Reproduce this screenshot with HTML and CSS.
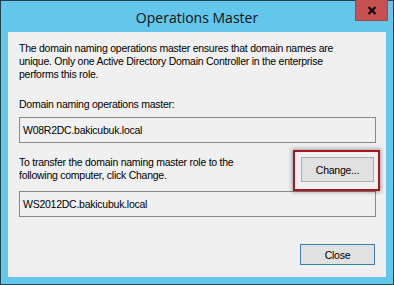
FILE: index.html
```html
<!DOCTYPE html>
<html lang="en">

<head>
    <meta charset="UTF-8">
    <meta name="viewport" content="width=device-width, initial-scale=1.0">
    <title>Operations Master</title>
    <link rel="stylesheet" href="styles.css">
</head>

<body>
    <div class="window">
        <div class="titlebar">
            <span class="title">Operations Master</span>
            <button class="close-x" aria-label="Close">
                <svg width="10" height="9" viewBox="0 0 10 9">
                    <path d="M1.5 1 L8.5 8 M8.5 1 L1.5 8" stroke="#111" stroke-width="2.4" fill="none" />
                </svg>
            </button>
        </div>

        <div class="client">
            <p class="intro">The domain naming operations master ensures that domain names are unique. Only one Active Directory Domain Controller in the enterprise performs this role.</p>

            <label class="field-label">Domain naming operations master:</label>
            <div class="textbox">W08R2DC.bakicubuk.local</div>

            <div class="transfer-row">
                <p class="transfer-text">To transfer the domain naming master role to the following computer, click Change.</p>
                <div class="highlight-wrap">
                    <button class="btn">Change...</button>
                    <span class="highlight"></span>
                </div>
            </div>
            <div class="textbox second">WS2012DC.bakicubuk.local</div>

            <div class="footer">
                <button class="btn default">Close</button>
            </div>
        </div>
    </div>
</body>

</html>
```

FILE: styles.css
```css
body {
    margin: 0;
    padding: 0;
    font-family: "Liberation Sans", Arial, sans-serif;
    font-size: 10.5px;
    letter-spacing: -0.25px;
    color: #000000;
    background: #ffffff;
}

.window {
    width: 394px;
    height: 285px;
    box-sizing: border-box;
    border: 1px solid #23404f;
    background-color: #62c7ea;
    display: flex;
    flex-direction: column;
    padding: 0 7px 7px 7px;
}

.titlebar {
    height: 31px;
    position: relative;
    display: flex;
    align-items: center;
    justify-content: center;
}

.title {
    font-family: "Open Sans", "Noto Sans", sans-serif;
    font-size: 14px;
    letter-spacing: 0;
    color: #111111;
    margin-top: 1px;
}

.close-x {
    position: absolute;
    top: -1px;
    right: -2px;
    width: 33px;
    height: 21px;
    padding: 0;
    border: 1px solid #9e4a46;
    border-top: none;
    background-color: #c75050;
    display: flex;
    align-items: center;
    justify-content: center;
}

.client {
    flex: 1;
    background-color: #f0f0f0;
    display: flex;
    flex-direction: column;
    padding: 10px 10px 0 11px;
}

.intro {
    margin: 0;
    line-height: 13px;
    max-width: 332px;
}

.field-label {
    display: block;
    margin-top: 17px;
    line-height: 13px;
}

.textbox {
    margin-top: 6px;
    height: 24px;
    border: 1px solid #8a8a8a;
    display: flex;
    align-items: center;
    padding-left: 3px;
}

.transfer-row {
    display: flex;
    justify-content: space-between;
    align-items: flex-start;
    margin-top: 13px;
}

.transfer-text {
    margin: 0;
    line-height: 13px;
    width: 232px;
}

.highlight-wrap {
    position: relative;
    margin-right: 2px;
    margin-top: 1px;
}

.highlight {
    position: absolute;
    top: -7px;
    left: -8px;
    right: -6px;
    bottom: -9px;
    border: 2px solid #a8161f;
    box-shadow: 0 0 4px 1px rgba(0, 0, 0, 0.35);
}

.btn {
    font-family: "Liberation Sans", Arial, sans-serif;
    font-size: 10.5px;
    letter-spacing: -0.25px;
    width: 73px;
    height: 25px;
    padding: 0;
    border: 1px solid #adadad;
    background-color: #e1e1e1;
    color: #000000;
}

.textbox.second {
    margin-top: 9px;
}

.footer {
    margin-top: auto;
    display: flex;
    justify-content: flex-end;
    padding: 0 1px 12px 0;
}

.btn.default {
    width: 75px;
    height: 21px;
    border-color: #3c7fb1;
}
```
